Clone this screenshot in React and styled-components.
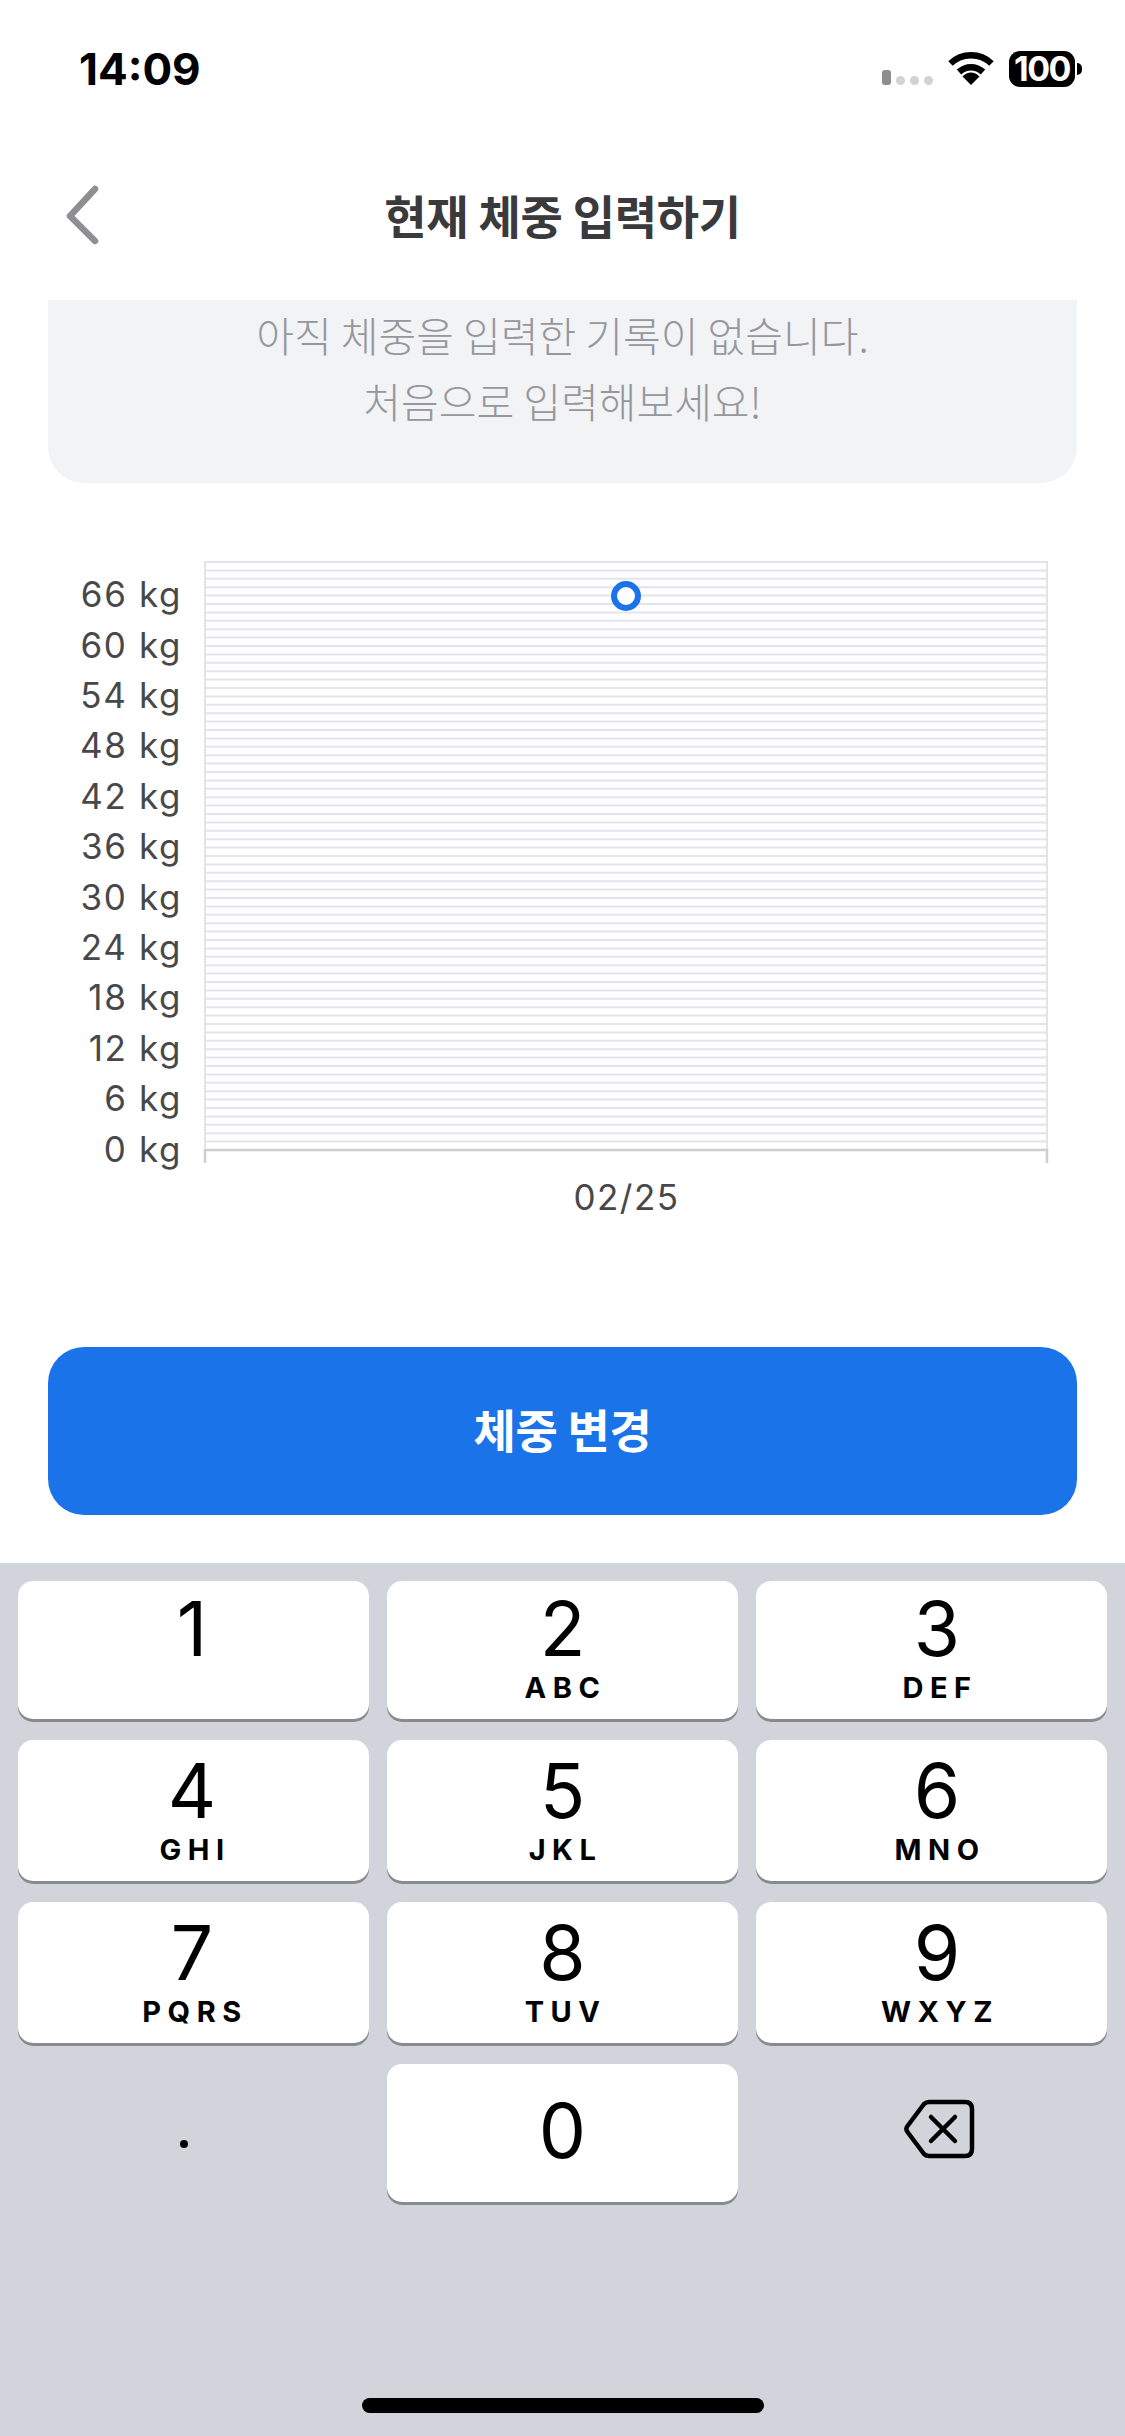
import styled, { createGlobalStyle } from 'styled-components';

const SANS = `Inter, "Noto Sans CJK KR", sans-serif`;
const KOREAN = `"Noto Sans CJK KR", sans-serif`;

const GlobalStyle = createGlobalStyle`
  html, body {
    margin: 0;
    padding: 0;
    background: #fff;
  }
  * {
    box-sizing: border-box;
  }
`;

const Page = styled.div`
  width: 1125px;
  height: 2436px;
  display: flex;
  flex-direction: column;
  overflow: hidden;
  background: #fff;
  font-family: ${SANS};
`;

const StatusBar = styled.div`
  height: 130px;
  padding: 45px 50px 0 79px;
  display: flex;
  align-items: flex-start;
  justify-content: space-between;
`;
const Time = styled.div`
  font-size: 44px;
  line-height: 48px;
  font-weight: 700;
  color: #000;
`;
const StatusIcons = styled.div`
  display: flex;
  align-items: flex-start;
  margin-top: 6px;
`;
const SignalDots = styled.div`
  display: flex;
  align-items: flex-end;
  gap: 5px;
  height: 34px;
  margin-right: 15px;
`;
const SignalDot = styled.span`
  width: 9px;
  height: ${(props) => (props.$active ? '15px' : '9px')};
  border-radius: ${(props) => (props.$active ? '3px' : '50%')};
  background: ${(props) => (props.$active ? '#8e8e8e' : '#d2d2d2')};
`;
const Battery = styled.div`
  position: relative;
  width: 66px;
  height: 36px;
  margin-left: 15px;
  border-radius: 11px;
  background: #000;
  color: #fff;
  font-size: 34px;
  line-height: 36px;
  font-weight: 700;
  letter-spacing: -1.5px;
  text-align: center;
  &::after {
    content: '';
    position: absolute;
    right: -7px;
    top: 12px;
    width: 5px;
    height: 12px;
    border-radius: 0 6px 6px 0;
    background: #000;
  }
`;

const NavBar = styled.div`
  position: relative;
  height: 170px;
  padding-bottom: 3px;
  display: flex;
  align-items: center;
  justify-content: center;
`;
const BackIcon = styled.svg`
  position: absolute;
  left: 64px;
  top: 55px;
`;
const Title = styled.h1`
  margin: 0;
  font-family: ${KOREAN};
  font-size: 46px;
  font-weight: 700;
  color: #3a3a3c;
  letter-spacing: -0.3px;
`;

const Notice = styled.div`
  margin: 0 48px;
  height: 183px;
  padding-top: 1px;
  border-radius: 0 0 36px 36px;
  background: #f2f3f5;
  font-family: ${KOREAN};
  font-size: 41px;
  line-height: 66px;
  font-weight: 300;
  color: #95979d;
  text-align: center;
`;

const Chart = styled.div`
  margin-top: 78px;
  display: flex;
  align-items: flex-start;
`;
const YAxis = styled.div`
  width: 182px;
  height: 588px;
  margin-right: 21px;
  display: flex;
  flex-direction: column-reverse;
`;
const YLabel = styled.div`
  height: 50.4px;
  line-height: 50.4px;
  flex: none;
  transform: translateY(25.2px);
  font-size: 35px;
  letter-spacing: 1.6px;
  color: #48484a;
  text-align: right;
  white-space: nowrap;
`;
const Plot = styled.svg`
  display: block;
  flex: none;
`;
const XLabel = styled.div`
  width: 100%;
  margin-top: 13px;
  padding-left: 128px;
  font-size: 35px;
  line-height: 42px;
  letter-spacing: 1.5px;
  color: #48484a;
  text-align: center;
`;

const SubmitButton = styled.button`
  margin: 129px 48px 0;
  height: 168px;
  padding: 0 0 6px;
  flex: none;
  border: none;
  border-radius: 36px;
  background: #1a73e8;
  color: #fff;
  font-family: ${KOREAN};
  font-size: 46px;
  font-weight: 700;
  letter-spacing: -0.3px;
`;

const Keyboard = styled.div`
  position: relative;
  margin-top: 48px;
  flex: 1;
  padding: 18px;
  background: #d1d4db;
`;
const KeyGrid = styled.div`
  display: grid;
  grid-template-columns: repeat(3, 351px);
  grid-template-rows: 138px 141px 141px 138px;
  column-gap: 18px;
  row-gap: 21px;
`;
const Key = styled.div`
  display: flex;
  flex-direction: column;
  align-items: center;
  justify-content: ${(props) => (props.$centered ? 'center' : 'flex-start')};
  padding: ${(props) => props.$top}px ${(props) => (props.$col === 0 ? 3 : 0)}px ${(props) => (props.$centered ? 5 : 0)}px
    ${(props) => (props.$col === 2 ? 11 : 0)}px;
  border-radius: 15px;
  background: #fff;
  box-shadow: 0 3px 0 #898a8d;
  color: #000;
`;
const EmptyKey = styled.div`
  display: flex;
  align-items: center;
  justify-content: center;
  padding: ${(props) => props.$pad};
  color: #000;
`;
const Digit = styled.div`
  font-size: 75px;
  line-height: 80px;
  font-weight: 400;
`;
const Letters = styled.div`
  margin-top: 2px;
  font-size: 29px;
  line-height: 34px;
  font-weight: 700;
  letter-spacing: 6.5px;
  padding-left: 6px;
`;
const Dot = styled.span`
  width: 8px;
  height: 8px;
  border-radius: 50%;
  background: #000;
`;
const HomeBar = styled.div`
  position: absolute;
  left: 362px;
  bottom: 23px;
  width: 402px;
  height: 15px;
  border-radius: 8px;
  background: #000;
`;

const yTicks = [0, 6, 12, 18, 24, 30, 36, 42, 48, 54, 60, 66];
const gridLines = Array.from({ length: 70 }, (_, i) => i * 8.4 + 1);
const keys = [
  ['1', '', 8],
  ['2', 'ABC', 8],
  ['3', 'DEF', 8],
  ['4', 'GHI', 11],
  ['5', 'JKL', 11],
  ['6', 'MNO', 11],
  ['7', 'PQRS', 11],
  ['8', 'TUV', 11],
  ['9', 'WXYZ', 11],
];

const App = () => {
  return (
    <Page>
      <GlobalStyle />
      <StatusBar>
        <Time>14:09</Time>
        <StatusIcons>
          <SignalDots>
            <SignalDot $active />
            <SignalDot />
            <SignalDot />
            <SignalDot />
          </SignalDots>
          <svg width="46" height="34" viewBox="0 0 46 34" fill="none">
            <path d="M2.5 12.5C14 1.5 32 1.5 43.5 12.5" stroke="#000" strokeWidth="6.5" />
            <path d="M11 21C18 14.5 28 14.5 35 21" stroke="#000" strokeWidth="6.5" />
            <path d="M14.5 25.5C19.5 20 26.5 20 31.5 25.5L23 34Z" fill="#000" />
          </svg>
          <Battery>100</Battery>
        </StatusIcons>
      </StatusBar>

      <NavBar>
        <BackIcon width="36" height="60" viewBox="0 0 36 60" fill="none">
          <path d="M31 4L6 31L31 56" stroke="#8e8e93" strokeWidth="6.5" strokeLinecap="round" strokeLinejoin="round" />
        </BackIcon>
        <Title>현재 체중 입력하기</Title>
      </NavBar>

      <Notice>
        아직 체중을 입력한 기록이 없습니다.
        <br />
        처음으로 입력해보세요!
      </Notice>

      <Chart>
        <YAxis>
          {yTicks.map((tick) => (
            <YLabel key={tick}>{tick} kg</YLabel>
          ))}
        </YAxis>
        <Plot width="846" height="602" viewBox="0 0 846 602">
          {gridLines.map((y) => (
            <line key={y} x1="1" x2="845" y1={y} y2={y} stroke="#e3e3ee" strokeWidth="2" />
          ))}
          <line x1="2" x2="2" y1="0" y2="588" stroke="#e3e3ec" strokeWidth="2" />
          <line x1="844" x2="844" y1="0" y2="588" stroke="#e3e3ec" strokeWidth="2" />
          <path d="M2 602V589H844V602" stroke="#cfcfd2" strokeWidth="2.5" fill="none" />
          <circle cx="423" cy="35" r="12" fill="#fff" stroke="#1a73e8" strokeWidth="6" />
        </Plot>
      </Chart>
      <XLabel>02/25</XLabel>

      <SubmitButton>체중 변경</SubmitButton>

      <Keyboard>
        <KeyGrid>
          {keys.map(([digit, letters, top], i) => (
            <Key key={digit} $top={top} $col={i % 3}>
              <Digit>{digit}</Digit>
              {letters && <Letters>{letters}</Letters>}
            </Key>
          ))}
          <EmptyKey $pad="22px 20px 0 0">
            <Dot />
          </EmptyKey>
          <Key $centered $top={0} $col={1}>
            <Digit>0</Digit>
          </Key>
          <EmptyKey $pad="0 0 8px 14px">
            <svg width="72" height="60" viewBox="0 0 72 60" fill="none">
              <path
                d="M26 3H62C66.5 3 69 5.5 69 10V50C69 54.5 66.5 57 62 57H26C24 57 22.5 56.3 21 55L4.5 33C3 31 3 29 4.5 27L21 5C22.5 3.7 24 3 26 3Z"
                stroke="#000"
                strokeWidth="4.5"
                strokeLinejoin="round"
              />
              <path d="M28 18L52 42M52 18L28 42" stroke="#000" strokeWidth="4.5" strokeLinecap="round" />
            </svg>
          </EmptyKey>
        </KeyGrid>
        <HomeBar />
      </Keyboard>
    </Page>
  );
};

export default App;
